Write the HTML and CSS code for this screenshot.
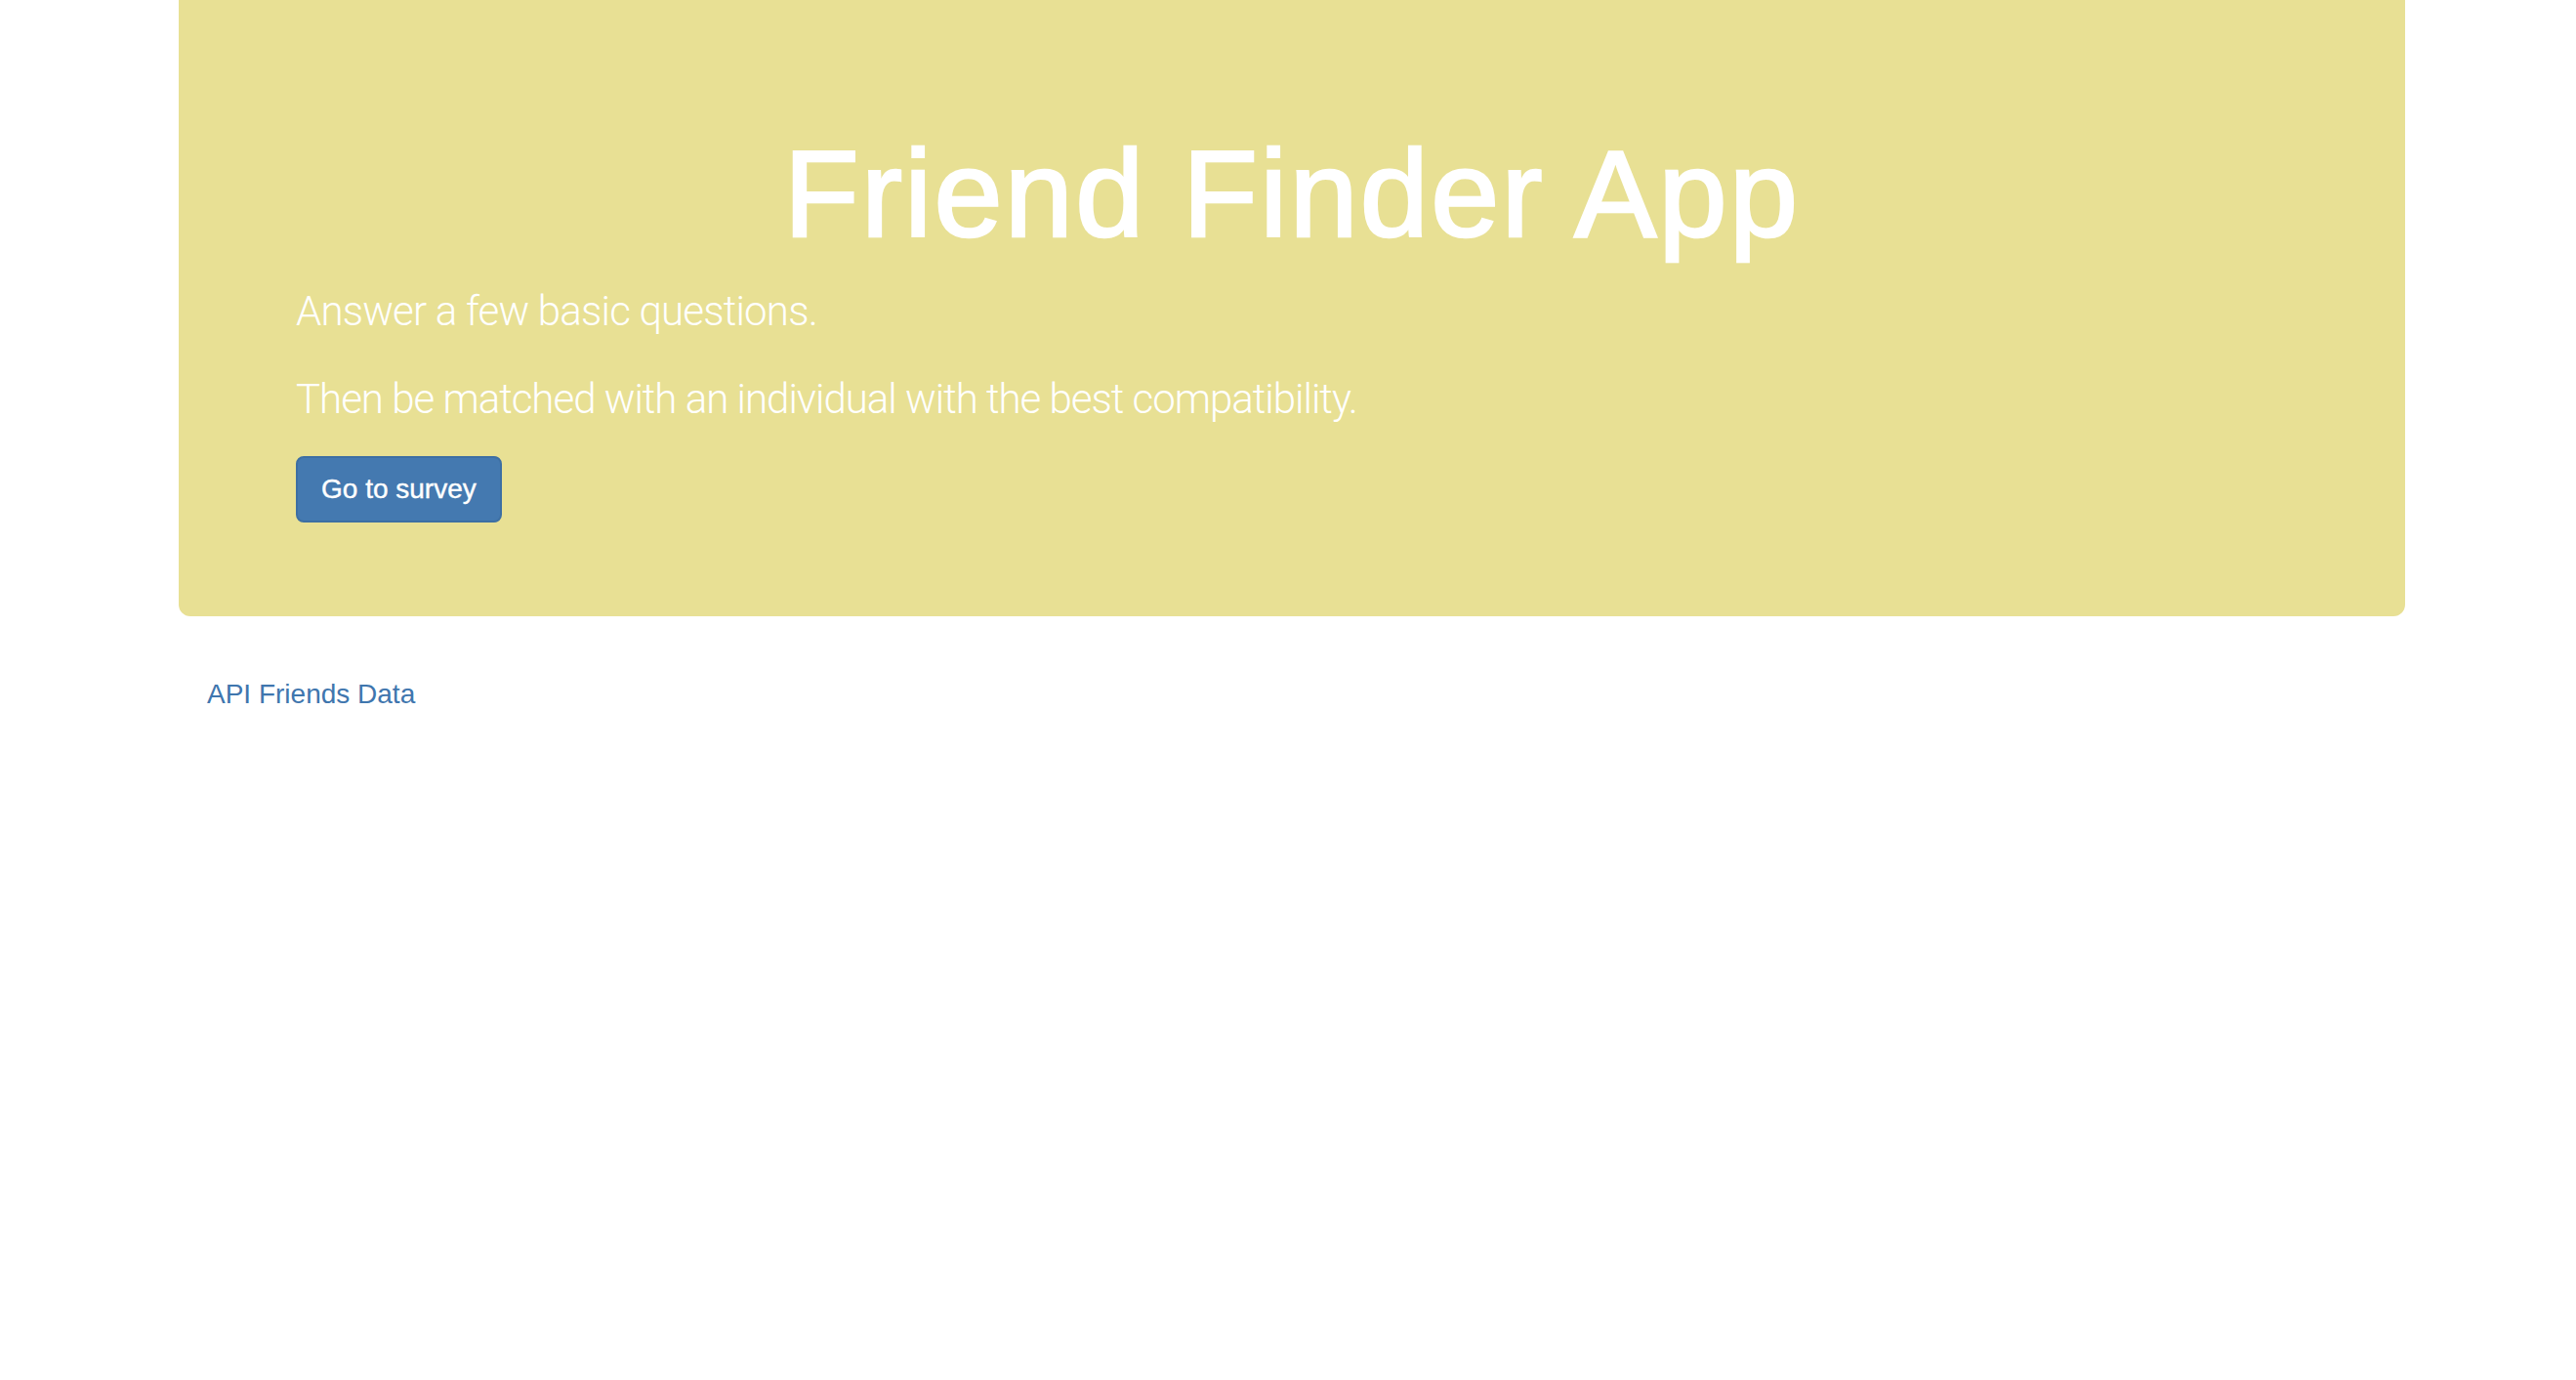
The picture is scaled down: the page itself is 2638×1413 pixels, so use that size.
FILE: index.html
```html
<!DOCTYPE html>
<html lang="en">
<head>
<meta charset="utf-8">
<title>Friend Finder App</title>
<link rel="stylesheet" href="styles.css">
</head>
<body>
<div class="container">
  <div class="jumbotron">
    <h1 class="title">Friend Finder App</h1>
    <p class="lead-line lead-first">Answer a few basic questions.</p>
    <p class="lead-line">Then be matched with an individual with the best compatibility.</p>
    <a class="btn-primary" href="#">Go to survey</a>
  </div>
  <div class="footer-links">
    <a class="api-link" href="#">API Friends Data</a>
  </div>
</div>
</body>
</html>
```

FILE: styles.css
```css
html, body {
  margin: 0;
  padding: 0;
  background: #ffffff;
}

body {
  font-family: "Liberation Sans", Arial, sans-serif;
  color: #333333;
}

.container {
  width: 2280px;
  margin-left: 183px;
}

.jumbotron {
  background: #e8e094;
  border-radius: 0 0 12px 12px;
  padding: 90px 120px 96px 120px;
  margin-bottom: 60px;
  display: flex;
  flex-direction: column;
  align-items: flex-start;
}

.title {
  align-self: stretch;
  text-align: center;
  font-family: "Liberation Sans", Arial, sans-serif;
  font-size: 126px;
  font-weight: 400;
  line-height: 1.1;
  letter-spacing: 2.3px;
  color: #ffffff;
  margin: 40px 0 20px 0;
  -webkit-text-stroke: 2.6px #ffffff;
}

.lead-line {
  font-family: Roboto, "Liberation Sans", sans-serif;
  font-weight: 300;
  font-size: 42px;
  line-height: 60px;
  letter-spacing: -1px;
  color: #ffffff;
  margin: 0 0 30px 0;
}

.lead-first {
  letter-spacing: -0.8px;
}

.btn-primary {
  display: inline-block;
  box-sizing: border-box;
  height: 68px;
  padding: 0 24px;
  line-height: 64px;
  font-size: 28px;
  color: #ffffff;
  text-decoration: none;
  background: #4479b0;
  border: 2px solid #3d6fa3;
  border-radius: 8px;
  margin-top: -2px;
  -webkit-text-stroke: 0.4px #ffffff;
}

.footer-links {
  padding-left: 29px;
}

.api-link {
  font-size: 28px;
  line-height: 40px;
  color: #3f76ae;
  text-decoration: none;
}
```
